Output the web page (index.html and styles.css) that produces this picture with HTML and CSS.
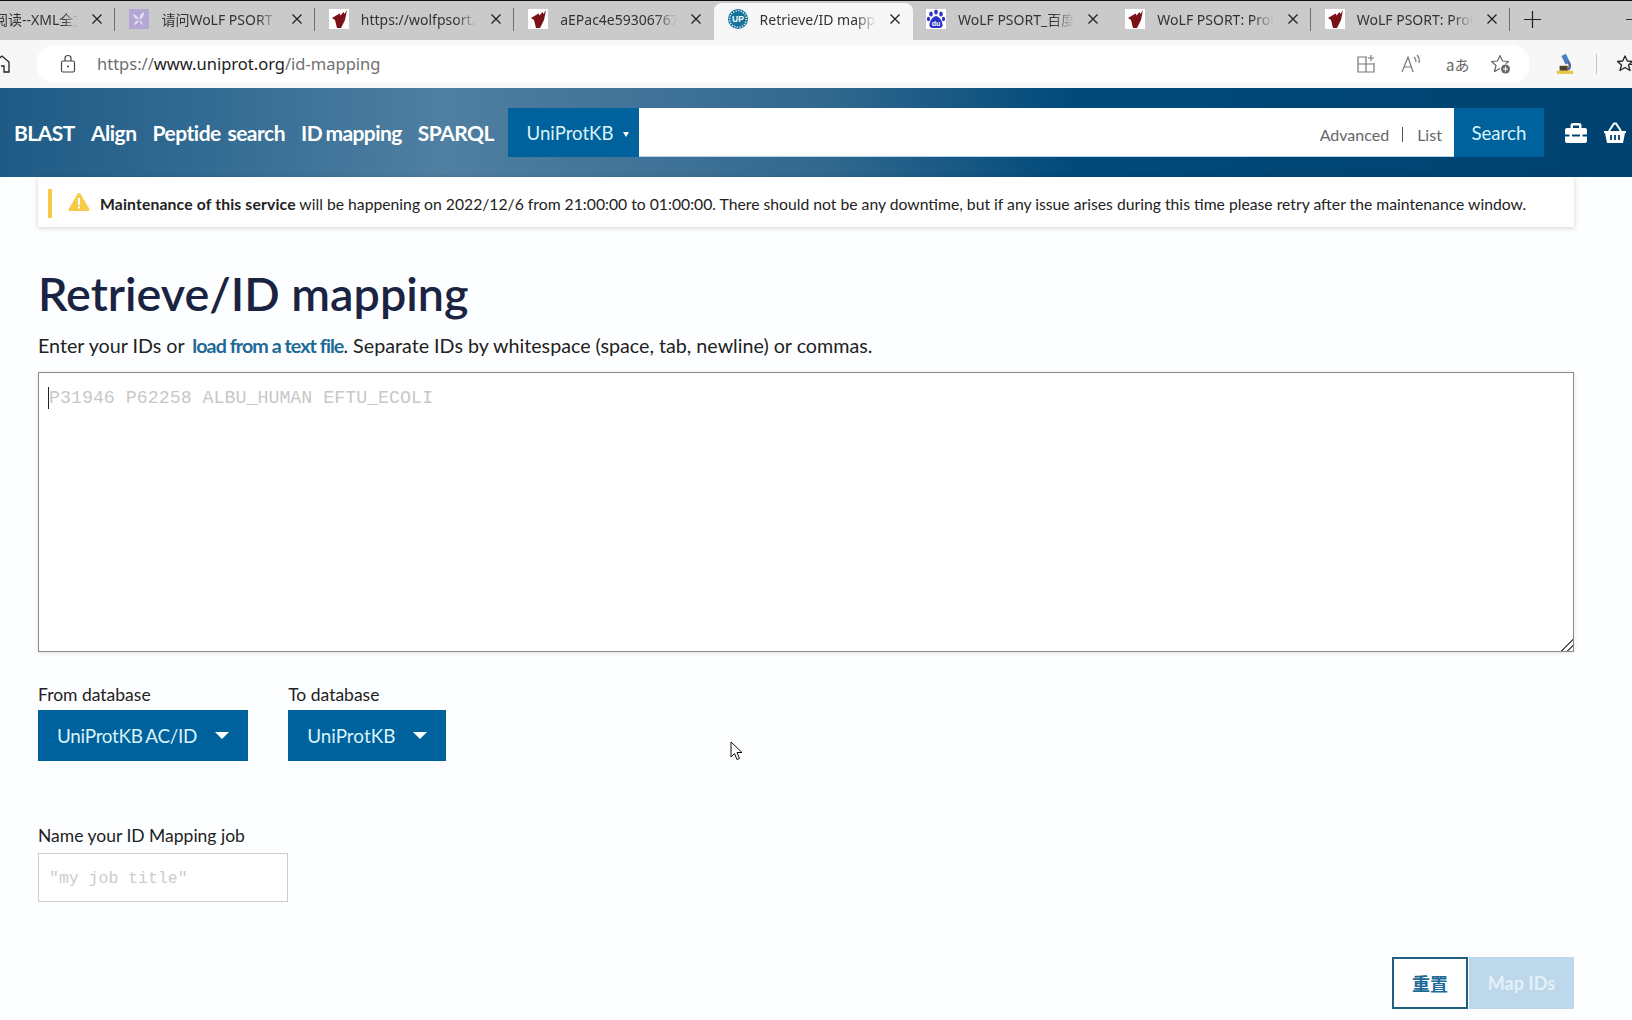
FILE: index.html
```html
<!DOCTYPE html>
<html lang="en">
<head>
    <meta charset="UTF-8">
    <title>Retrieve/ID mapping</title>
    <link rel="stylesheet" href="styles.css">
</head>
<body>
<svg class="defs" width="0" height="0">
    <symbol id="wolf" viewBox="0 0 20 20">
        <rect width="20" height="20" fill="#fff"/>
        <path d="M18 1 L15.500 5 L14.500 3 L11.500 6.500 L10.500 4.500 L3 9 L6 11 L8 19 L12 19 L16 11 L17 6 Z" fill="#7a1218"/>
    </symbol>
    <symbol id="close" viewBox="0 0 12 12">
        <path d="M1.500 1.500 L10.500 10.500 M10.500 1.500 L1.500 10.500" stroke="#222" stroke-width="1.300" fill="none"/>
    </symbol>
</svg>

<div class="tabstrip">
    <div class="tab first">
        <span class="tab-title">阅读--XML全文</span>
        <svg class="tab-close"><use href="#close"/></svg>
    </div>
    <div class="tab">
        <svg class="favicon" viewBox="0 0 20 20">
            <rect width="20" height="20" fill="#b4a7d6"/>
            <path d="M15 3 Q15 9 10.500 10.500 Q10 6 15 3 Z M4 5 Q8 6 9.500 10 Q5 10 4 5 Z M5 16 Q6 12 9.500 11 Q9 15 5 16 Z M14 16 Q13 12 10.500 11 Q11 15 14 16 Z" fill="#e8e3f4"/>
        </svg>
        <span class="tab-title">请问WoLF PSORT 在线</span>
        <svg class="tab-close"><use href="#close"/></svg>
    </div>
    <div class="tab">
        <svg class="favicon"><use href="#wolf"/></svg>
        <span class="tab-title">https://wolfpsort.hgc.jp</span>
        <svg class="tab-close"><use href="#close"/></svg>
    </div>
    <div class="tab before-active">
        <svg class="favicon"><use href="#wolf"/></svg>
        <span class="tab-title">aEPac4e593067671</span>
        <svg class="tab-close"><use href="#close"/></svg>
    </div>
    <div class="tab active">
        <svg class="favicon" viewBox="0 0 20 20">
            <circle cx="10" cy="10" r="10" fill="#15739c"/>
            <circle cx="10" cy="10" r="8.300" fill="none" stroke="#fff" stroke-width="1.300" stroke-dasharray="1.200 1.400"/>
            <text x="10" y="13" class="favicon-up">UP</text>
        </svg>
        <span class="tab-title">Retrieve/ID mapping</span>
        <svg class="tab-close"><use href="#close"/></svg>
    </div>
    <div class="tab after-active">
        <svg class="favicon" viewBox="0 0 20 20">
            <rect width="20" height="20" fill="#fff"/>
            <ellipse cx="5" cy="5" rx="1.800" ry="2.600" fill="#2b32c4"/>
            <ellipse cx="10" cy="3" rx="1.800" ry="2.600" fill="#2b32c4"/>
            <ellipse cx="15" cy="5" rx="1.800" ry="2.600" fill="#2b32c4"/>
            <ellipse cx="2.500" cy="10" rx="1.600" ry="2.200" fill="#2b32c4"/>
            <ellipse cx="17.500" cy="10" rx="1.600" ry="2.200" fill="#2b32c4"/>
            <path d="M10 7 Q14 8 16 13 Q18 19 13 19 L7 19 Q2 19 4 13 Q6 8 10 7 Z" fill="#2b32c4"/>
            <text x="10" y="17" class="favicon-du">du</text>
        </svg>
        <span class="tab-title">WoLF PSORT_百度百科</span>
        <svg class="tab-close"><use href="#close"/></svg>
    </div>
    <div class="tab">
        <svg class="favicon"><use href="#wolf"/></svg>
        <span class="tab-title">WoLF PSORT: Protein</span>
        <svg class="tab-close"><use href="#close"/></svg>
    </div>
    <div class="tab">
        <svg class="favicon"><use href="#wolf"/></svg>
        <span class="tab-title">WoLF PSORT: Protein</span>
        <svg class="tab-close"><use href="#close"/></svg>
    </div>
    <svg class="tab-new" viewBox="0 0 20 20"><path d="M10 1 V19 M1 10 H19" stroke="#222" stroke-width="1.300" fill="none"/></svg>
    <span class="win-min"></span>
</div>

<div class="toolbar">
    <svg class="home-icon" viewBox="0 0 20 20"><path d="M-8 10 L2 2 L9 8 V18 H4 V12 H1" stroke="#222" stroke-width="1.300" fill="none"/></svg>
    <div class="omnibox">
        <svg class="lock-icon" viewBox="0 0 16 20">
            <rect x="1.500" y="7" width="13" height="11" rx="1.500" stroke="#444" stroke-width="1.200" fill="none"/>
            <path d="M5 7 V4 Q5 1.500 8 1.500 Q11 1.500 11 4 V7" stroke="#444" stroke-width="1.200" fill="none"/>
            <circle cx="8" cy="12.500" r="1" fill="#444"/>
        </svg>
        <span class="url">https://<b>www.uniprot.org</b>/id-mapping</span>
        <div class="omni-icons">
            <svg class="omni-icon" viewBox="0 0 20 20">
                <path d="M11 3 H2 V18 H18 V9 M2 10 H18 M10 3 V18 M15 1 V7 M12 4 H18" stroke="#777" stroke-width="1.200" fill="none"/>
            </svg>
            <svg class="omni-icon" viewBox="0 0 20 20">
                <path d="M1 18 L7 3 L12 18 M3.500 13 H10.500 M13 3 Q15 5 15 8 M16 1 Q19 4 18 9" stroke="#777" stroke-width="1.200" fill="none"/>
            </svg>
            <span class="omni-translate">aあ</span>
            <svg class="omni-icon" viewBox="0 0 20 20">
                <path d="M9 1.500 L11.500 7 L17.500 7.500 L13 11.500 L14.500 17.500 L9 14.500 L3.500 17.500 L5 11.500 L.5 7.500 L6.500 7 Z" stroke="#666" stroke-width="1.200" fill="none" stroke-linejoin="round"/>
                <circle cx="14.500" cy="15" r="5.500" fill="#fff"/>
                <circle cx="14.500" cy="15" r="4.500" fill="#666"/>
                <path d="M14.500 12.500 V17.500 M12 15 H17" stroke="#fff" stroke-width="1.200"/>
            </svg>
        </div>
    </div>
    <svg class="ext-icon" viewBox="0 0 20 24">
        <path d="M6 3 L11 .5 L15.500 10 L10.500 12.500 Z" fill="#4d7fc9"/>
        <path d="M14 8 Q19 13 15 19 H12 Q16 14 12 10 Z" fill="#54688f"/>
        <path d="M4 14 H13 V19.500 H4 Z" fill="#4f4326"/>
        <rect x="1" y="19.500" width="18" height="3.500" fill="#e6c63c"/>
    </svg>
    <span class="toolbar-sep"></span>
    <svg class="fav-icon" viewBox="0 0 20 20">
        <path d="M8 2 L10.300 7 L15.500 7.500 L11.500 11 L13 16.500 L8 13.500 L3 16.500 L4.500 11 L.5 7.500 L5.700 7 Z" stroke="#222" stroke-width="1.300" fill="none" stroke-linejoin="round"/>
        <path d="M13 7.500 H20 M13 10.500 H20" stroke="#222" stroke-width="1.200"/>
    </svg>
</div>

<header class="site-header">
    <nav class="main-nav">
        <a href="#">BLAST</a>
        <a href="#">Align</a>
        <a href="#" class="nav-wide">Peptide search</a>
        <a href="#" class="nav-tight">ID mapping</a>
        <a href="#">SPARQL</a>
    </nav>
    <div class="searchbar">
        <button class="db-select">UniProtKB <i class="caret-small"></i></button>
        <input class="search-input" type="text">
        <div class="search-links">
            <a href="#">Advanced</a>
            <a href="#" class="list-link">List</a>
        </div>
        <button class="search-btn">Search</button>
    </div>
    <div class="header-icons">
        <svg class="head-icon" viewBox="0 0 24 22">
            <path d="M6.500 6 V3.500 Q6.500 1 9 1 H15 Q17.500 1 17.500 3.500 V6 H15 V3.500 H9 V6 Z" fill="#fff"/>
            <path d="M1 8 Q1 6 3 6 H21 Q23 6 23 8 V12.500 H1 Z M1 14.500 H23 V19 Q23 21 21 21 H3 Q1 21 1 19 Z" fill="#fff"/>
            <rect x="5.500" y="11.500" width="2.500" height="4" fill="#fff"/>
            <rect x="16" y="11.500" width="2.500" height="4" fill="#fff"/>
        </svg>
        <svg class="head-icon" viewBox="0 0 24 22">
            <path d="M1 9 H23 V11 H22 L20 21 H4 L2 11 H1 Z" fill="#fff"/>
            <path d="M6 9 L11 1.500 H13 L18 9" stroke="#fff" stroke-width="2" fill="none"/>
            <path d="M8 13 V18 M12 13 V18 M16 13 V18" stroke="#00426f" stroke-width="1.800"/>
        </svg>
    </div>
</header>

<main class="page">
    <div class="banner">
        <span class="banner-bar"></span>
        <svg class="warn-icon" viewBox="0 0 22 20">
            <path d="M11 1 Q12 1 12.500 2 L21.500 17 Q22 19 20 19 H2 Q0 19 .5 17 L9.500 2 Q10 1 11 1 Z" fill="#f8ca4a"/>
            <rect x="10" y="6" width="2" height="7" fill="#fff"/>
            <rect x="10" y="14.500" width="2" height="2" fill="#fff"/>
        </svg>
        <p class="banner-text"><b>Maintenance of this service</b> will be happening on 2022/12/6 from 21:00:00 to 01:00:00. There should not be any downtime, but if any issue arises during this time please retry after the maintenance window.</p>
    </div>

    <h1 class="title">Retrieve/ID mapping</h1>
    <p class="intro">Enter your IDs or <a href="#">load from a text file</a>. Separate IDs by whitespace (space, tab, newline) or commas.</p>

    <div class="ids-wrap">
        <textarea class="ids" placeholder="P31946 P62258 ALBU_HUMAN EFTU_ECOLI"></textarea>
        <span class="text-caret"></span>
    </div>

    <div class="db-row">
        <div class="db-field">
            <label>From database</label>
            <button class="dropdown dropdown-tight">UniProtKB AC/ID <i class="caret"></i></button>
        </div>
        <div class="db-field">
            <label>To database</label>
            <button class="dropdown">UniProtKB <i class="caret"></i></button>
        </div>
    </div>

    <div class="job-field">
        <label>Name your ID Mapping job</label>
        <input class="job-input" type="text" placeholder="″my job title″">
    </div>

    <div class="actions">
        <button class="btn-reset">重置</button>
        <button class="btn-map">Map IDs</button>
    </div>
</main>

<svg class="mouse" viewBox="0 0 14 20">
    <path d="M1 1 V16 L4.500 12.500 L7 18.500 L9.500 17.500 L7 11.500 L12 11.500 Z" fill="#fff" stroke="#111" stroke-width="1"/>
</svg>
</body>
</html>
```

FILE: styles.css
```css
* {
    box-sizing: border-box;
}
html, body {
    margin: 0;
    height: 1020px;
    overflow: hidden;
}
body {
    font-family: Lato, "Noto Sans CJK SC", sans-serif;
    background: #fdfeff;
    color: #222;
}
a {
    text-decoration: none;
}
.defs {
    position: absolute;
}

/* browser tabs */
.tabstrip {
    display: flex;
    align-items: stretch;
    height: 40px;
    margin-left: -84px;
    background: #cacaca;
    border-top: 1px solid #111;
    font-family: "Noto Sans", "Noto Sans CJK SC", sans-serif;
    font-size: 14px;
    color: #333;
}
.tab {
    display: flex;
    align-items: center;
    flex: 0 0 199.400px;
    width: 199.400px;
    padding: 0 12px 3px 14px;
    position: relative;
}
.tab::after {
    content: "";
    position: absolute;
    right: 0;
    top: 7px;
    bottom: 9px;
    width: 1px;
    background: #6e6e6e;
}
.tab.before-active::after, .tab.active::after, .tab.after-active::after {
    display: none;
}
.tab.after-active {
    margin-left: -1px;
}
.tab.active {
    background: #f7f7f7;
    border-radius: 8px 8px 0 0;
    margin-top: 2px;
    padding-bottom: 5px;
}
.favicon {
    flex: none;
    width: 20px;
    height: 20px;
    margin-right: 12px;
}
.tab.first .tab-title {
    margin-left: 64px;
}
.favicon-up {
    font: bold 8.500px "Liberation Sans", sans-serif;
    fill: #fff;
    text-anchor: middle;
}
.favicon-du {
    font: bold 7px "Liberation Sans", sans-serif;
    fill: #fff;
    text-anchor: middle;
}
.tab-title {
    flex: 1;
    white-space: nowrap;
    overflow: hidden;
    min-width: 0;
    -webkit-mask-image: linear-gradient(90deg, #000 82%, transparent);
    mask-image: linear-gradient(90deg, #000 82%, transparent);
}
.tab-close {
    flex: none;
    width: 12px;
    height: 12px;
    margin-left: 13px;
}
.tab-new {
    flex: none;
    width: 19px;
    height: 19px;
    margin: 9px 0 0 13px;
}
.win-min {
    flex: none;
    width: 6px;
    height: 1px;
    margin: 18px 0 0 auto;
    background: #333;
}

/* address bar */
.toolbar {
    display: flex;
    align-items: center;
    height: 48px;
    background: #f7f7f7;
}
.home-icon {
    flex: none;
    width: 20px;
    height: 20px;
    overflow: visible;
}
.omnibox {
    display: flex;
    align-items: center;
    flex: none;
    width: 1494px;
    height: 38px;
    margin-left: 16px;
    padding-left: 24px;
    background: #fff;
    border-radius: 19px;
}
.lock-icon {
    flex: none;
    width: 16px;
    height: 20px;
}
.url {
    margin: -2px 0 0 21px;
    font-family: "Noto Sans", sans-serif;
    font-size: 16.500px;
    color: #6f6f6f;
}
.url b {
    font-weight: normal;
    color: #222;
}
.omni-icons {
    display: flex;
    align-items: center;
    gap: 25px;
    margin-left: auto;
    padding-right: 19px;
}
.omni-icon {
    width: 20px;
    height: 20px;
}
.omni-translate {
    width: 20px;
    font-family: "Noto Sans CJK JP", sans-serif;
    font-size: 15px;
    color: #666;
    white-space: nowrap;
}
.ext-icon {
    flex: none;
    width: 18px;
    height: 22px;
    margin-left: 26px;
}
.toolbar-sep {
    flex: none;
    width: 1px;
    height: 20px;
    margin-left: 22px;
    background: #c4c4c4;
}
.fav-icon {
    flex: none;
    width: 20px;
    height: 20px;
    margin-left: 20px;
}

/* uniprot header */
.site-header {
    display: flex;
    align-items: center;
    height: 89px;
    padding-left: 14px;
    background: linear-gradient(90deg, #1f5b86 0, #316a92 12%, #4f7fa1 27%, #33698f 50%, #004a7a 66%, #00426f 100%);
}
.main-nav {
    display: flex;
    gap: 16px;
}
.main-nav a {
    font-size: 21px;
    font-weight: 700;
    letter-spacing: -.5px;
    color: #fff;
}
.main-nav .nav-wide {
    word-spacing: 2px;
}
.main-nav .nav-tight {
    letter-spacing: -.6px;
    word-spacing: -1px;
}
.searchbar {
    display: flex;
    align-items: stretch;
    height: 49px;
    margin-left: 14px;
    position: relative;
}
.db-select {
    width: 131px;
    padding: 0 0 0 9px;
    border: 0;
    background: #00629c;
    color: #d8f3fa;
    font: 18.600px Lato, sans-serif;
}
.caret-small {
    display: inline-block;
    margin-left: 5px;
    vertical-align: middle;
    border: 3.500px solid transparent;
    border-top: 5px solid #fff;
    border-bottom: 0;
}
.search-input {
    width: 815px;
    border: 0;
    border-bottom: 1px solid #b9d3e6;
    background: #fff;
}
.search-links {
    position: absolute;
    right: 102px;
    top: 17px;
    display: flex;
    align-items: center;
    font-size: 16px;
}
.search-links a {
    color: #666;
}
.list-link {
    margin-left: 13px;
    padding-left: 14px;
    border-left: 1px solid #555;
    line-height: 15px;
}
.search-btn {
    width: 90px;
    border: 0;
    background: #00629c;
    color: #d8f3fa;
    font: 18.700px Lato, sans-serif;
}
.header-icons {
    display: flex;
    gap: 15px;
    margin-left: 20px;
}
.head-icon {
    width: 24px;
    height: 22px;
}

/* page */
.page {
    padding: 0 58px 0 38px;
}
.banner {
    display: flex;
    align-items: center;
    height: 50px;
    padding-left: 10px;
    background: #fff;
    box-shadow: 0 1px 5px rgba(0, 0, 0, .18);
}
.banner-bar {
    flex: none;
    width: 4px;
    height: 29px;
    margin-top: 3px;
    background: #f8ca4a;
}
.warn-icon {
    flex: none;
    width: 22px;
    height: 20px;
    margin-left: 16px;
}
.banner-text {
    margin: 2px 0 0 10px;
    font-size: 15.730px;
    white-space: nowrap;
    color: #222;
}
.banner-text b {
    letter-spacing: .15px;
}
.title {
    margin: 35px 0 0;
    font-size: 46.700px;
    line-height: 62px;
    font-weight: 600;
    color: #1a2341;
}
.intro {
    margin: 10px 0 0;
    font-size: 19.700px;
    line-height: 24px;
}
.intro a {
    margin-left: 3px;
    color: #1d6a96;
    font-weight: 700;
    letter-spacing: -.95px;
}
.ids-wrap {
    position: relative;
    margin-top: 14px;
}
.ids {
    display: block;
    width: 100%;
    height: 280px;
    padding: 13px 10px;
    border: 1px solid #8a8a8a;
    box-shadow: 0 1px 4px rgba(0, 0, 0, .12);
    font-family: "Liberation Mono", monospace;
    font-size: 18.300px;
    line-height: 24px;
    outline: 0;
}
.ids::placeholder {
    color: #c8c8c8;
}
.ids::-webkit-resizer {
    background: linear-gradient(135deg, transparent 60%, #555 60%, #555 66%, transparent 66%, transparent 78%, #555 78%, #555 84%, transparent 84%);
}
.text-caret {
    position: absolute;
    left: 10px;
    top: 15px;
    width: 1px;
    height: 22px;
    background: #222;
}
.db-row {
    display: flex;
    gap: 40px;
    margin-top: 32px;
}
.db-field label, .job-field label {
    display: block;
    font-size: 17.500px;
    line-height: 22px;
}
.dropdown {
    display: flex;
    align-items: center;
    height: 51px;
    margin-top: 4px;
    padding: 0 19px;
    border: 0;
    background: #00629c;
    color: #d8f3fa;
    font: 18.900px Lato, sans-serif;
}
.dropdown-tight {
    letter-spacing: -.27px;
    word-spacing: -1.500px;
}
.caret {
    margin-left: 18px;
    border: 7px solid transparent;
    border-top: 7px solid #fff;
    border-bottom: 0;
}
.job-field {
    margin-top: 64px;
}
.job-input {
    display: block;
    width: 250px;
    height: 49px;
    margin-top: 6px;
    padding: 2px 10px 0;
    border: 1px solid #ccc;
    font-family: "Liberation Mono", monospace;
    font-size: 16.500px;
    background: #fff;
}
.job-input::placeholder {
    color: #ccc;
}
.actions {
    display: flex;
    justify-content: flex-end;
    gap: 1px;
    margin-top: 55px;
}
.btn-reset {
    width: 76px;
    height: 52px;
    border: 2px solid #1f5f7f;
    background: #fff;
    color: #1d6a96;
    font: 700 18px Lato, "Noto Sans CJK SC", sans-serif;
}
.btn-map {
    width: 105px;
    height: 52px;
    border: 0;
    background: #bdd8ea;
    color: #e4f0f8;
    font: 700 18px Lato, sans-serif;
}

/* mouse pointer sitting on the screenshot */
.mouse {
    position: absolute;
    left: 730px;
    top: 741px;
    width: 14px;
    height: 20px;
}
```
